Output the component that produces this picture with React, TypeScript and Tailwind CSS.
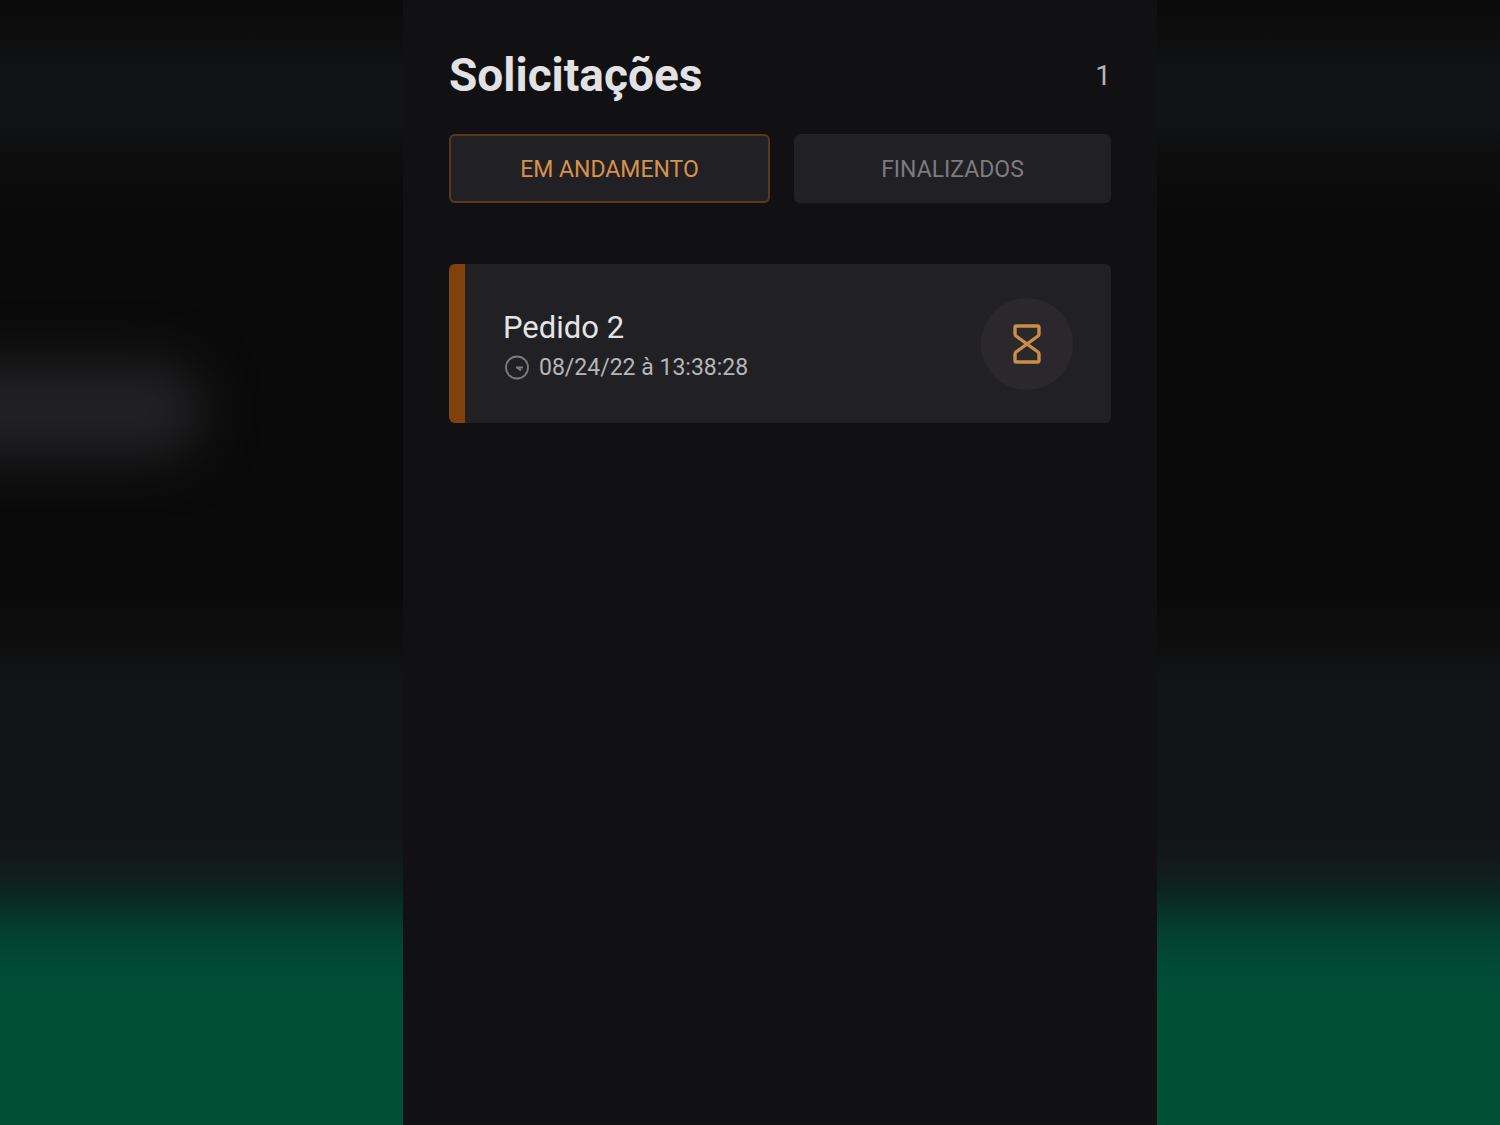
import { useState } from "react";

type Status = "open" | "closed";

interface Order {
  id: number;
  title: string;
  when: string;
  status: Status;
}

const orders: Order[] = [
  { id: 2, title: "Pedido 2", when: "08/24/22 à 13:38:28", status: "open" },
];

const tabs: { status: Status; label: string }[] = [
  { status: "open", label: "EM ANDAMENTO" },
  { status: "closed", label: "FINALIZADOS" },
];

function HourglassIcon() {
  return (
    <svg width="30" height="42" viewBox="0 0 30 42" fill="none" stroke="#cd8c47" strokeWidth="3.4" strokeLinejoin="round" aria-hidden="true">
      <path d="M4.5 3H25.5Q27 3 27 4.5V10.5Q27 12 26 13L4 29Q3 30 3 31.500V37.500Q3 39 4.500 39H25.500Q27 39 27 37.500V31.500Q27 30 26 29L4 13Q3 12 3 10.500V4.500Q3 3 4.500 3Z" />
    </svg>
  );
}

function ClockIcon() {
  return (
    <svg width="26" height="26" viewBox="0 0 26 26" fill="none" stroke="#7c7c80" aria-hidden="true">
      <circle cx="13" cy="12.500" r="11" strokeWidth="1.8" />
      <path d="M12 12.500H19M13 12.500L17 15.500" strokeWidth="2" />
    </svg>
  );
}

function OrderCard({ order }: { order: Order }) {
  return (
    <li className="flex overflow-hidden rounded-md bg-[#212024]">
      <div className="w-4 shrink-0 bg-[#80420a]" />
      <div className="flex flex-1 items-center justify-between px-[38px] pt-[34px] pb-[33px]">
        <div className="pt-2">
          <h2 className="text-[31px] leading-10 text-[#e4e4e6]">{order.title}</h2>
          <p className="flex items-center gap-[9px] pl-px text-[23px] leading-10 text-[#b6b6b9]">
            <ClockIcon />
            {order.when}
          </p>
        </div>
        <div className="flex size-[92px] items-center justify-center rounded-full bg-[#2a282d]">
          <HourglassIcon />
        </div>
      </div>
    </li>
  );
}

export default function App() {
  const [active, setActive] = useState<Status>("open");
  const visible = orders.filter((order) => order.status === active);

  return (
    <div className="relative isolate grid min-h-screen grid-cols-[403fr_754fr_343fr] overflow-hidden bg-[linear-gradient(to_bottom,#0a0a0a_0%,#0c0c0c_2%,#111214_6%,#111214_11%,#0c0c0c_15%,#0a0a0a_19%,#0a0a0a_53%,#0e0e0e_57%,#121416_61%,#121416_74%,#111b19_77%,#0d231e_79%,#063329_81%,#04412f_83%,#014a33_86%,#005036_89%)] font-['Roboto',sans-serif]">
      <div className="absolute top-[362px] -left-24 -z-10 h-24 w-[300px] rounded-full bg-[#222124] blur-[26px]" />
      <main className="col-start-2 bg-[#111113] px-[46px] pt-12">
        <header className="flex items-start justify-between">
          <h1 className="text-[46px] leading-[54px] font-bold text-[#e2e2e5]">Solicitações</h1>
          <span className="text-[28px] leading-[56px] text-[#b4b4b7]">{visible.length}</span>
        </header>
        <div className="mt-[30px] flex gap-6">
          {tabs.map((tab) => (
            <button
              key={tab.status}
              type="button"
              aria-pressed={active === tab.status}
              onClick={() => setActive(tab.status)}
              className={
                active === tab.status
                  ? "h-[69px] flex-1 rounded-md border-2 border-[#5c381a] bg-[#212024] pt-1 text-[23px] text-[#d8924b]"
                  : "h-[69px] flex-1 rounded-md bg-[#212024] pt-1 text-[23px] text-[#7c7c7f]"
              }
            >
              {tab.label}
            </button>
          ))}
        </div>
        <ul className="mt-[61px] flex flex-col gap-6">
          {visible.map((order) => (
            <OrderCard key={order.id} order={order} />
          ))}
        </ul>
      </main>
    </div>
  );
}
